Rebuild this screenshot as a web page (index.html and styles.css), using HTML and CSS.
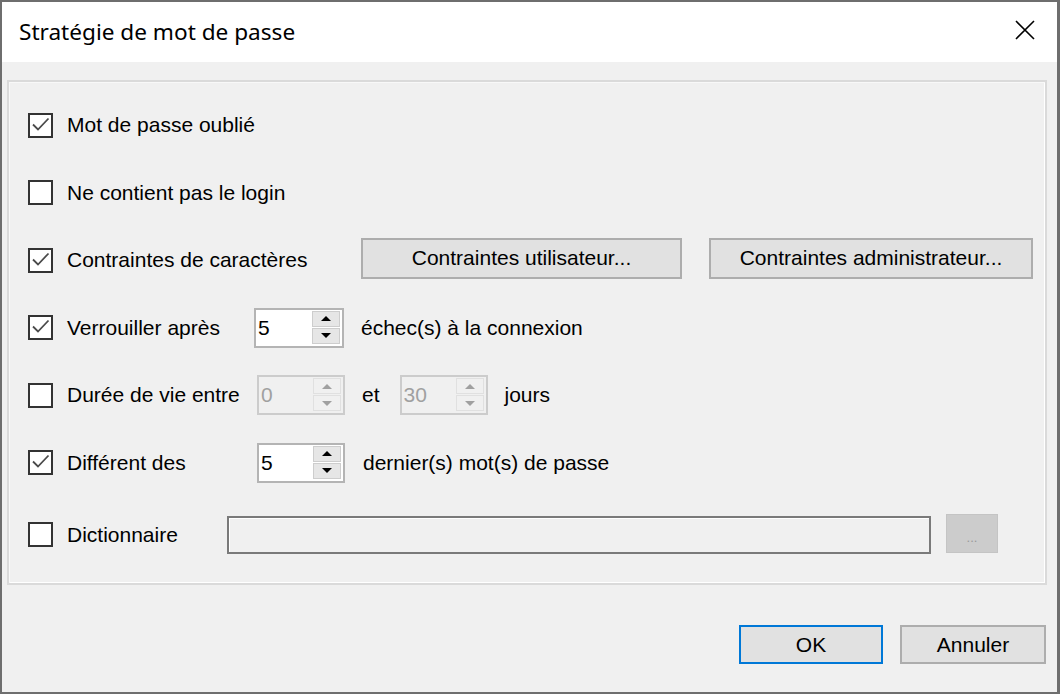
FILE: index.html
```html
<!DOCTYPE html>
<html lang="fr">
<head>
  <meta charset="UTF-8">
  <title>Stratégie de mot de passe</title>
  <link rel="stylesheet" href="styles.css">
</head>
<body>
  <div class="window">
    <div class="titlebar">
      <span class="title">Stratégie de mot de passe</span>
      <svg class="close" width="20" height="20" viewBox="0 0 20 20">
        <path d="M1 1 L19 19 M19 1 L1 19" stroke="#000" stroke-width="1.6" fill="none"/>
      </svg>
    </div>

    <div class="content">
      <div class="panel">
        <div class="row">
          <span class="check on"><svg viewBox="0 0 21 21"><path d="M3 9.5 L8 14.5 L18.5 3.5" /></svg></span>
          <span class="label">Mot de passe oublié</span>
        </div>

        <div class="row">
          <span class="check"></span>
          <span class="label">Ne contient pas le login</span>
        </div>

        <div class="row">
          <span class="check on"><svg viewBox="0 0 21 21"><path d="M3 9.5 L8 14.5 L18.5 3.5" /></svg></span>
          <span class="label">Contraintes de caractères</span>
          <button class="btn user">Contraintes utilisateur...</button>
          <button class="btn admin">Contraintes administrateur...</button>
        </div>

        <div class="row">
          <span class="check on"><svg viewBox="0 0 21 21"><path d="M3 9.5 L8 14.5 L18.5 3.5" /></svg></span>
          <span class="label">Verrouiller après</span>
          <div class="spin">
            <span class="spin-value">5</span>
            <span class="spin-buttons">
              <span class="spin-btn"><span class="arrow up"></span></span>
              <span class="spin-btn"><span class="arrow down"></span></span>
            </span>
          </div>
          <span class="after">échec(s) à la connexion</span>
        </div>

        <div class="row">
          <span class="check"></span>
          <span class="label wide">Durée de vie entre</span>
          <div class="spin small disabled">
            <span class="spin-value">0</span>
            <span class="spin-buttons">
              <span class="spin-btn"><span class="arrow up"></span></span>
              <span class="spin-btn"><span class="arrow down"></span></span>
            </span>
          </div>
          <span class="after">et</span>
          <div class="spin small disabled second">
            <span class="spin-value">30</span>
            <span class="spin-buttons">
              <span class="spin-btn"><span class="arrow up"></span></span>
              <span class="spin-btn"><span class="arrow down"></span></span>
            </span>
          </div>
          <span class="after">jours</span>
        </div>

        <div class="row">
          <span class="check on"><svg viewBox="0 0 21 21"><path d="M3 9.5 L8 14.5 L18.5 3.5" /></svg></span>
          <span class="label wide">Différent des</span>
          <div class="spin small">
            <span class="spin-value">5</span>
            <span class="spin-buttons">
              <span class="spin-btn"><span class="arrow up"></span></span>
              <span class="spin-btn"><span class="arrow down"></span></span>
            </span>
          </div>
          <span class="after far">dernier(s) mot(s) de passe</span>
        </div>

        <div class="row last">
          <span class="check"></span>
          <span class="label dict">Dictionnaire</span>
          <div class="field"></div>
          <button class="browse" disabled>...</button>
        </div>
      </div>

      <div class="footer">
        <button class="btn action default">OK</button>
        <button class="btn action">Annuler</button>
      </div>
    </div>
  </div>
</body>
</html>
```

FILE: styles.css
```css
body {
  margin: 0;
  background: #6e6e6e;
  font-family: "Liberation Sans", Arial, sans-serif;
  font-size: 21px;
  color: #000;
}
.window {
  width: 1060px;
  height: 694px;
  box-sizing: border-box;
  border: 2px solid #6e6e6e;
  border-right-width: 3px;
  background: #f0f0f0;
  display: flex;
  flex-direction: column;
}
.titlebar {
  height: 60px;
  flex: none;
  background: #fff;
  display: flex;
  align-items: center;
  justify-content: space-between;
  padding: 0 22px 0 17px;
}
.title {
  font-family: "Noto Sans", "Open Sans", sans-serif;
  font-size: 22.6px;
  margin-top: -2px;
}
.close {
  display: block;
  margin-top: -4px;
}
.content {
  flex: 1;
  display: flex;
  flex-direction: column;
}
.panel {
  margin: 18px 10px 0 5px;
  height: 505px;
  box-sizing: border-box;
  border: 2px solid #dadada;
  box-shadow: inset 1px 1px 0 #f8f8f8, inset -1px -1px 0 #fff;
  padding: 9.5px 0 0 19px;
}
.row {
  height: 67.5px;
  display: flex;
  align-items: center;
}
.row.last {
  margin-top: 4.5px;
}
.check {
  width: 25px;
  height: 25px;
  box-sizing: border-box;
  border: 2px solid #333;
  background: #fff;
  flex: none;
}
.check svg {
  display: block;
  width: 21px;
  height: 21px;
}
.check path {
  fill: none;
  stroke: #4a4a4a;
  stroke-width: 1.8;
}
.label {
  margin-left: 14px;
  width: 187px;
  flex: none;
  white-space: nowrap;
}
.label.wide {
  width: 190px;
}
.label.dict {
  width: 160px;
}
.btn {
  font-family: "Liberation Sans", Arial, sans-serif;
  font-size: 21px;
  color: #000;
  background: #e1e1e1;
  border: 2px solid #adadad;
  padding: 0;
  height: 41px;
  margin-bottom: 4px;
}
.btn.user {
  width: 321px;
  margin-left: 107px;
}
.btn.admin {
  width: 324px;
  margin-left: 27px;
}
.spin {
  width: 90px;
  height: 40px;
  box-sizing: border-box;
  border: 2px solid #b4b4b4;
  background: #fff;
  display: flex;
  flex: none;
}
.spin.small {
  width: 88px;
}
.spin.second {
  margin-left: 20px;
}
.spin-value {
  flex: 1;
  padding-left: 2px;
  line-height: 36px;
}
.spin-buttons {
  width: 28px;
  display: flex;
  flex-direction: column;
  gap: 1px;
  padding: 1px 2px 2px 0;
}
.spin-btn {
  flex: 1;
  background: #e6e6e6;
  border: 1px solid #cdcdcd;
  display: flex;
  align-items: center;
  justify-content: center;
}
.arrow {
  width: 0;
  height: 0;
  border-left: 5px solid transparent;
  border-right: 5px solid transparent;
}
.arrow.up {
  border-bottom: 5px solid #000;
}
.arrow.down {
  border-top: 5px solid #000;
}
.spin.disabled {
  background: #f0f0f0;
  border-color: #cccccc;
}
.spin.disabled .spin-value {
  color: #a0a0a0;
}
.spin.disabled .spin-btn {
  background: #f0f0f0;
  border-color: #e0e0e0;
}
.spin.disabled .arrow.up {
  border-bottom-color: #a0a0a0;
}
.spin.disabled .arrow.down {
  border-top-color: #a0a0a0;
}
.after {
  margin-left: 17px;
  white-space: nowrap;
}
.after.far {
  margin-left: 18px;
}
.field {
  width: 704px;
  height: 38px;
  box-sizing: border-box;
  border: 2px solid #7a7a7a;
  box-shadow: inset 1px 1px 0 #fff;
  background: #f0f0f0;
}
.browse {
  margin-left: 15px;
  width: 52px;
  height: 39px;
  margin-bottom: 2px;
  background: #cccccc;
  border: 1px solid #c4c4c4;
  color: #9a9a9a;
  font-family: "Liberation Sans", Arial, sans-serif;
  font-size: 13px;
  padding: 8px 0 0;
}
.footer {
  display: flex;
  justify-content: flex-end;
  gap: 17px;
  padding: 40px 11px 0 0;
}
.btn.action {
  width: 144px;
  height: 39px;
  margin: 0;
}
.btn.action + .btn.action {
  width: 146px;
}
.btn.default {
  border-color: #0078d7;
}
```
